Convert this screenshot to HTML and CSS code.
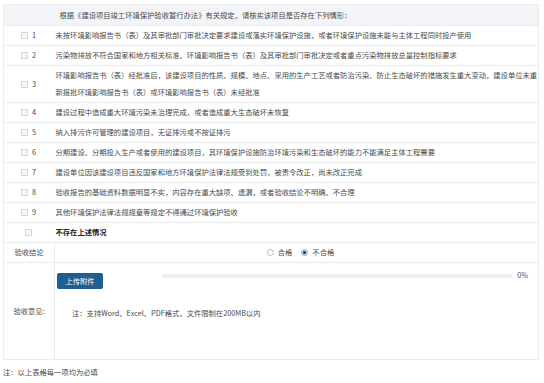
FILE: index.html
```html
<!DOCTYPE html>
<html lang="zh-CN">
<head>
    <meta charset="UTF-8">
    <meta name="viewport" content="width=device-width, initial-scale=1.0">
    <title>环境保护验收</title>
    <link rel="stylesheet" href="styles.css">
</head>
<body>
    <table class="check-table">
        <tr class="head-row">
            <td class="col-no"></td>
            <td class="head-text">根据《建设项目竣工环境保护验收暂行办法》有关规定，请核实该项目是否存在下列情形：</td>
        </tr>
        <tr>
            <td class="col-no"><span class="box"></span><span>1</span></td>
            <td class="item">未按环境影响报告书（表）及其审批部门审批决定要求建设或落实环境保护设施，或者环境保护设施未能与主体工程同时投产使用</td>
        </tr>
        <tr>
            <td class="col-no"><span class="box"></span><span>2</span></td>
            <td class="item">污染物排放不符合国家和地方相关标准、环境影响报告书（表）及其审批部门审批决定或者重点污染物排放总量控制指标要求</td>
        </tr>
        <tr>
            <td class="col-no"><span class="box"></span><span>3</span></td>
            <td class="item">环境影响报告书（表）经批准后，该建设项目的性质、规模、地点、采用的生产工艺或者防治污染、防止生态破坏的措施发生重大变动，建设单位未重新报批环境影响报告书（表）或环境影响报告书（表）未经批准</td>
        </tr>
        <tr>
            <td class="col-no"><span class="box"></span><span>4</span></td>
            <td class="item">建设过程中造成重大环境污染未治理完成，或者造成重大生态破坏未恢复</td>
        </tr>
        <tr>
            <td class="col-no"><span class="box"></span><span>5</span></td>
            <td class="item">纳入排污许可管理的建设项目，无证排污或不按证排污</td>
        </tr>
        <tr>
            <td class="col-no"><span class="box"></span><span>6</span></td>
            <td class="item">分期建设、分期投入生产或者使用的建设项目，其环境保护设施防治环境污染和生态破坏的能力不能满足主体工程需要</td>
        </tr>
        <tr>
            <td class="col-no"><span class="box"></span><span>7</span></td>
            <td class="item">建设单位因该建设项目违反国家和地方环境保护法律法规受到处罚，被责令改正，尚未改正完成</td>
        </tr>
        <tr>
            <td class="col-no"><span class="box"></span><span>8</span></td>
            <td class="item">验收报告的基础资料数据明显不实，内容存在重大缺项、遗漏，或者验收结论不明确、不合理</td>
        </tr>
        <tr>
            <td class="col-no"><span class="box"></span><span>9</span></td>
            <td class="item">其他环境保护法律法规规章等规定不得通过环境保护验收</td>
        </tr>
        <tr>
            <td class="col-no center"><span class="box"></span></td>
            <td class="item strong">不存在上述情况</td>
        </tr>
        <tr class="form-row">
            <td class="label">验收结论</td>
            <td class="value">
                <div class="radios">
                    <label class="radio"><span class="dot"></span>合格</label>
                    <label class="radio"><span class="dot checked"></span>不合格</label>
                </div>
            </td>
        </tr>
        <tr class="form-row upload-row">
            <td class="label">验收意见:</td>
            <td class="value">
                <div class="upload-line">
                    <button class="upload-btn">上传附件</button>
                    <div class="progress">
                        <div class="bar"></div>
                        <span class="percent">0%</span>
                    </div>
                </div>
                <div class="note">注：支持Word、Excel、PDF格式，文件限制在200MB以内</div>
            </td>
        </tr>
    </table>

    <div class="footer-note">注：以上表格每一项均为必填</div>
</body>
</html>
```

FILE: styles.css
```css
body {
    font-family: "Noto Sans CJK SC", "Noto Sans", sans-serif;
    font-size: 7.3px;
    color: #4a4a4a;
    margin: 0;
    padding: 4px 5px 0 3px;
    background: #fff;
}

.check-table {
    width: 100%;
    border-collapse: collapse;
    border: 1px solid #ececec;
}

.check-table td {
    line-height: 17px;
    padding: 1px 0;
    border-bottom: 1px solid #ececec;
    vertical-align: middle;
}

.head-row td {
    background: #f3f4f7;
    height: 18px;
}

.head-text {
    padding-left: 5px !important;
}

.col-no {
    width: 51px;
    padding-left: 17px !important;
    box-sizing: border-box;
    white-space: nowrap;
}

.col-no.center {
    padding-left: 21px !important;
}

.box {
    display: inline-block;
    width: 5px;
    height: 5px;
    border: 1px solid #d6d6d6;
    background: #f7f7f7;
    margin-right: 4px;
    vertical-align: -1px;
}

.item {
    padding-left: 1px !important;
}

.strong {
    font-weight: bold;
    color: #222;
}

.form-row td {
    border-top: 1px solid #ececec;
}

.form-row .label {
    text-align: center;
    padding: 0 !important;
    border-right: 1px solid #ececec;
}

.radios {
    display: flex;
    justify-content: center;
    gap: 9px;
    padding-left: 8px;
}

.radio {
    display: flex;
    align-items: center;
    gap: 4px;
}

.dot {
    width: 5px;
    height: 5px;
    border: 1px solid #bbb;
    border-radius: 50%;
    background: #fff;
}

.dot.checked {
    border-color: #8db0cf;
    background: radial-gradient(circle, #27445e 0 1.3px, #c3d9ec 1.6px);
}

.upload-row td {
    height: 90px;
}

.upload-row .value {
    vertical-align: top;
    padding: 6px 10px 0 2px !important;
}

.upload-line {
    display: flex;
    align-items: flex-start;
}

.upload-btn {
    width: 46px;
    height: 16px;
    margin-top: 4px;
    padding: 0;
    border: none;
    border-radius: 2px;
    background: #1f5e90;
    color: #fff;
    font-family: inherit;
    font-size: 7.3px;
    cursor: pointer;
}

.progress {
    flex: 1;
    display: flex;
    align-items: center;
    margin-left: 59px;
    margin-top: -2px;
}

.bar {
    flex: 1;
    height: 4px;
    background: #efefef;
}

.percent {
    margin-left: 5px;
    color: #555;
}

.note {
    margin-top: 16px;
    padding-left: 15px;
}

.footer-note {
    margin-top: 7px;
}
```
